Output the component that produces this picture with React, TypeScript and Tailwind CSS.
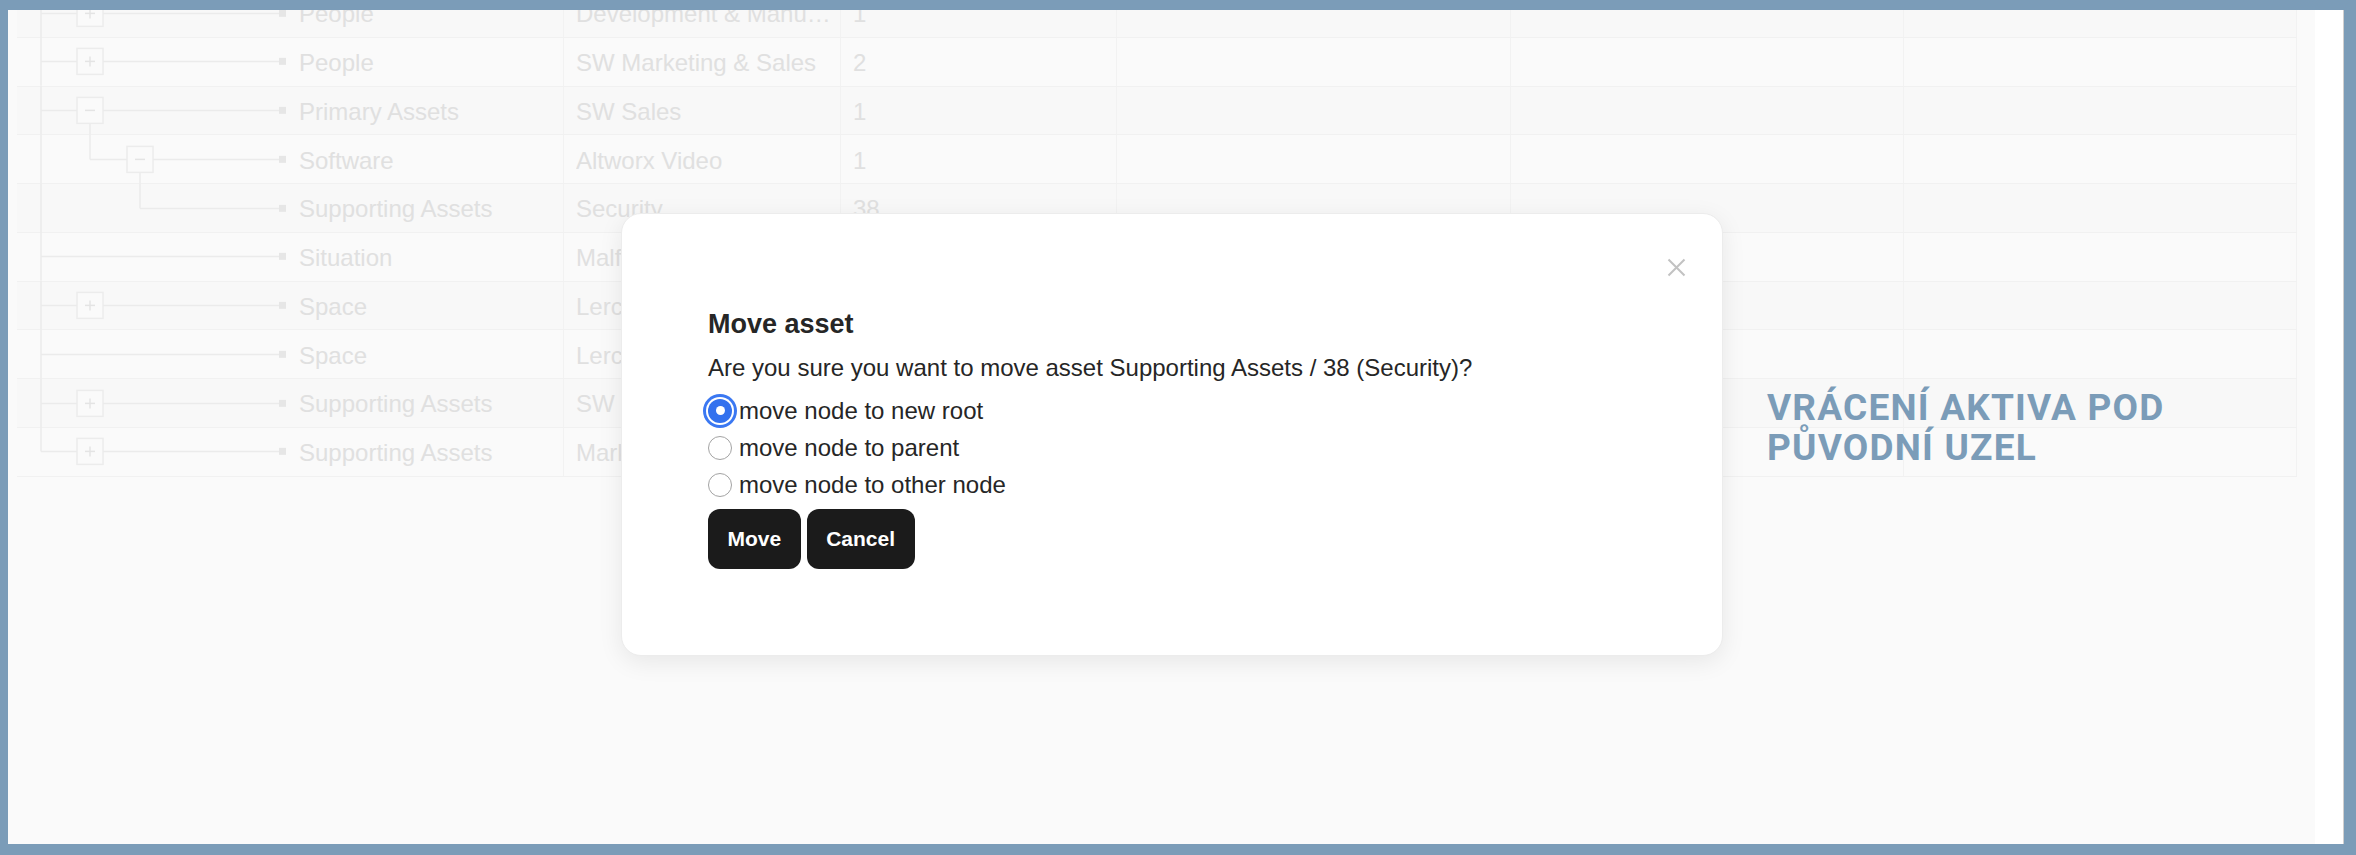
import React from "react";

type Row = {
  name: string;
  dim: string;
  count: string;
  level?: number;
  box?: "+" | "-";
};

const rows: Row[] = [
  { name: "People", dim: "Development & Manufacturing", count: "1", box: "+" },
  { name: "People", dim: "SW Marketing & Sales", count: "2", box: "+" },
  { name: "Primary Assets", dim: "SW Sales", count: "1", box: "-" },
  { name: "Software", dim: "Altworx Video", count: "1", level: 1, box: "-" },
  { name: "Supporting Assets", dim: "Security", count: "38", level: 2 },
  { name: "Situation", dim: "Malfunction", count: "4" },
  { name: "Space", dim: "Lerchova", count: "2", box: "+" },
  { name: "Space", dim: "Lercher", count: "1" },
  { name: "Supporting Assets", dim: "SW Development", count: "12", box: "+" },
  { name: "Supporting Assets", dim: "Marketing", count: "7", box: "+" },
];

const H = 48.75;
const C = H / 2;
const LINE = "#ebebeb";

function ExpandBox({ x, sign }: { x: number; sign: "+" | "-" }) {
  return (
    <g>
      <rect x={x} y={C - 13} width={26} height={26} fill="#fafafa" stroke="#ececec" strokeWidth={1.5} />
      <line x1={x + 8} y1={C} x2={x + 18} y2={C} stroke="#e4e4e4" strokeWidth={1.5} />
      {sign === "+" && <line x1={x + 13} y1={C - 5} x2={x + 13} y2={C + 5} stroke="#e4e4e4" strokeWidth={1.5} />}
    </g>
  );
}

function TreeGutter({ row, index, last }: { row: Row; index: number; last: boolean }) {
  const level = row.level ?? 0;
  const startX = level === 0 ? 24 : level === 1 ? 73 : 123;
  return (
    <svg width={282} height={H} className="shrink-0">
      {/* root spine */}
      <line x1={24} y1={0} x2={24} y2={last ? C : H} stroke={LINE} strokeWidth={1.5} />
      {/* branch */}
      <line x1={startX} y1={C} x2={265} y2={C} stroke={LINE} strokeWidth={1.5} />
      {/* children connectors */}
      {index === 2 && <line x1={73} y1={C + 13} x2={73} y2={H} stroke={LINE} strokeWidth={1.5} />}
      {index === 3 && <line x1={73} y1={0} x2={73} y2={C} stroke={LINE} strokeWidth={1.5} />}
      {index === 3 && <line x1={123} y1={C + 13} x2={123} y2={H} stroke={LINE} strokeWidth={1.5} />}
      {index === 4 && <line x1={123} y1={0} x2={123} y2={C} stroke={LINE} strokeWidth={1.5} />}
      {row.box && <ExpandBox x={level === 1 ? 110 : 60} sign={row.box} />}
      <rect x={262} y={C - 3.5} width={7} height={7} fill="#e6e6e6" />
    </svg>
  );
}

function Radio({ checked, label }: { checked?: boolean; label: string }) {
  return (
    <label className="flex h-[37px] items-center gap-[7px]">
      {checked ? (
        <span className="flex h-[24px] w-[24px] items-center justify-center rounded-full bg-[#3371ee] shadow-[0_0_0_2px_#ffffff,0_0_0_5px_#3b78f2]">
          <span className="h-[9px] w-[9px] rounded-full bg-white" />
        </span>
      ) : (
        <span className="h-[24px] w-[24px] rounded-full border-[1.5px] border-[#a3a3a3] bg-white" />
      )}
      <span>{label}</span>
    </label>
  );
}

export default function App() {
  return (
    <div className="h-[855px] w-[2356px] bg-[#7b9cb8] pb-[11px] pl-[8px] pr-[12px] pt-[10px] font-['Liberation_Sans',Arial,sans-serif]">
      <div className="relative flex h-full overflow-hidden bg-white">
        {/* dimmed page */}
        <div className="h-full w-[2307px] bg-[#fafafa]">
          <div className="ml-[9px] mt-[-21px] w-[2280px]">
            {rows.map((row, i) => (
              <div
                key={i}
                className={`flex h-[48.75px] border-b border-[#f1f1f1] text-[24px] text-[#e0e0e0] ${
                  i % 2 === 0 ? "bg-[#f8f8f8]" : "bg-[#fafafa]"
                }`}
              >
                <div className="flex w-[546px] items-center">
                  <TreeGutter row={row} index={i} last={i === rows.length - 1} />
                  <span className="pt-[3px]">{row.name}</span>
                </div>
                <div className="flex w-[277px] items-center border-l border-[#f2f2f2] pl-[12px] pr-[8px] pt-[3px]">
                  <span className="truncate">{row.dim}</span>
                </div>
                <div className="flex w-[276px] items-center border-l border-[#f2f2f2] pl-[12px] pt-[3px]">{row.count}</div>
                <div className="w-[394px] border-l border-[#f2f2f2]" />
                <div className="w-[393px] border-l border-[#f2f2f2]" />
                <div className="w-[394px] border-x border-[#f2f2f2]" />
              </div>
            ))}
          </div>
        </div>
        <div className="h-full flex-1 border-r border-[#cfcfcf] bg-white" />

        {/* annotation */}
        <div className="absolute left-[1759px] top-[378px] font-['Roboto',sans-serif] text-[37px] font-bold uppercase leading-[40px] tracking-[1.2px] text-[#7b9cb8]">
          <div>Vrácení aktiva pod</div>
          <div>Původní uzel</div>
        </div>

        {/* modal */}
        <div className="absolute left-[613px] top-[203px] w-[1102px] rounded-[20px] border border-[#ececec] bg-white pb-[86px] pt-[44px] text-[#262626] shadow-[0_6px_24px_rgba(0,0,0,0.08)]">
          <div className="flex h-[19px] justify-end pr-[36px]">
            <svg width={19} height={19} viewBox="0 0 19 19">
              <path d="M1.5 1.5 L17.5 17.5 M17.5 1.5 L1.5 17.5" stroke="#c2c2c2" strokeWidth={2} />
            </svg>
          </div>
          <div className="mt-[31px] px-[86px]">
            <h2 className="text-[27px] font-bold leading-[32px]">Move asset</h2>
            <p className="mt-[10px] text-[24px] leading-[36px]">
              Are you sure you want to move asset Supporting Assets / 38 (Security)?
            </p>
            <div className="mt-[6px] text-[24px]">
              <Radio checked label="move node to new root" />
              <Radio label="move node to parent" />
              <Radio label="move node to other node" />
            </div>
            <div className="mt-[6px] flex gap-[6px]">
              <button className="h-[60px] rounded-[12px] bg-[#1b1b1b] px-[19.5px] text-[21px] font-bold text-white">
                Move
              </button>
              <button className="h-[60px] rounded-[12px] bg-[#1b1b1b] px-[19.5px] text-[21px] font-bold text-white">
                Cancel
              </button>
            </div>
          </div>
        </div>
      </div>
    </div>
  );
}
